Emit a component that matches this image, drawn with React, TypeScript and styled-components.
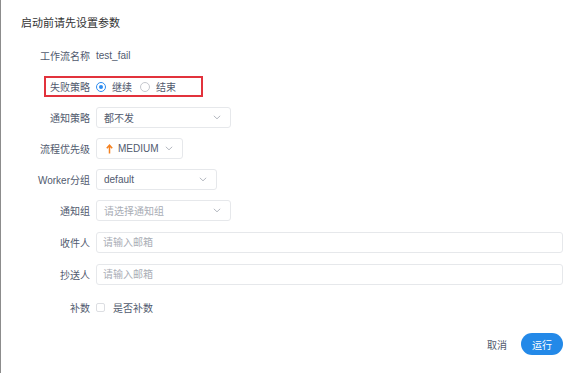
import styled, { createGlobalStyle } from 'styled-components';

const GlobalStyle = createGlobalStyle`
  body {
    margin: 0;
    background: #fff;
    font-family: "Liberation Sans", "Noto Sans CJK SC", sans-serif;
  }
`;

const Chevron = () => (
  <svg width="8" height="5" viewBox="0 0 8 5">
    <path d="M0.8 0.8 L4 3.8 L7.2 0.8" fill="none" stroke="#b4b8c0" strokeWidth="1" />
  </svg>
);

const UpArrow = () => (
  <svg width="7" height="10" viewBox="0 0 7 10">
    <path d="M3.5 9.5 V1.5 M0.8 4.2 L3.5 1.2 L6.2 4.2" fill="none" stroke="#f5811f" strokeWidth="1.5" />
  </svg>
);

const App = () => {
  return (
    <>
      <GlobalStyle />
      <Frame>
        <Title>启动前请先设置参数</Title>
        <Form>
          <Row>
            <Label>工作流名称</Label>
            <Value>test_fail</Value>
          </Row>
          <Row $marked>
            <Label>失败策略</Label>
            <RadioGroup>
              <RadioItem>
                <RadioDot $checked />
                继续
              </RadioItem>
              <RadioItem>
                <RadioDot />
                结束
              </RadioItem>
            </RadioGroup>
          </Row>
          <Row>
            <Label>通知策略</Label>
            <Select $width={135}>
              <span>都不发</span>
              <Chevron />
            </Select>
          </Row>
          <Row>
            <Label>流程优先级</Label>
            <Select $width={87}>
              <Priority>
                <UpArrow />
                MEDIUM
              </Priority>
              <Chevron />
            </Select>
          </Row>
          <Row>
            <Label>Worker分组</Label>
            <Select $width={121}>
              <span>default</span>
              <Chevron />
            </Select>
          </Row>
          <Row>
            <Label>通知组</Label>
            <Select $width={135} $placeholder>
              <span>请选择通知组</span>
              <Chevron />
            </Select>
          </Row>
          <Row $gapTop={1}>
            <Label>收件人</Label>
            <Input placeholder="请输入邮箱" />
          </Row>
          <Row $gapTop={1}>
            <Label>抄送人</Label>
            <Input placeholder="请输入邮箱" />
          </Row>
          <Row $gapTop={2}>
            <Label>补数</Label>
            <CheckItem>
              <CheckBox />
              是否补数
            </CheckItem>
          </Row>
        </Form>
        <Footer>
          <TextButton>取消</TextButton>
          <PrimaryButton>运行</PrimaryButton>
        </Footer>
      </Frame>
    </>
  );
};

export default App;

const Frame = styled.div`
  box-sizing: border-box;
  height: 373px;
  border-left: 1px solid #8c8c8c;
  padding: 15px 17px 0 19px;
`;

const Title = styled.div`
  font-size: 11px;
  line-height: 16px;
  color: #333;
  margin-left: 1px;
  margin-bottom: 14px;
`;

const Form = styled.div`
  display: flex;
  flex-direction: column;
  gap: 10px;
`;

const Row = styled.div<{ $marked?: boolean; $gapTop?: number }>`
  position: relative;
  display: flex;
  align-items: center;
  height: 21px;
  margin-top: ${(p) => p.$gapTop ?? 0}px;

  ${(p) =>
    p.$marked &&
    `
    &::after {
      content: "";
      position: absolute;
      box-sizing: border-box;
      left: 24px;
      top: 0;
      width: 159px;
      height: 21px;
      border: 2px solid #e2323c;
    }
  `}
`;

const Label = styled.div`
  box-sizing: border-box;
  width: 76px;
  flex: none;
  padding-right: 6px;
  text-align: right;
  font-size: 10px;
  color: #515a6e;
  white-space: nowrap;
`;

const Value = styled.div`
  font-size: 10px;
  color: #515a6e;
`;

const RadioGroup = styled.div`
  display: flex;
  align-items: center;
  gap: 8px;
`;

const RadioItem = styled.label`
  display: flex;
  align-items: center;
  gap: 6px;
  font-size: 10px;
  color: #515a6e;
`;

const RadioDot = styled.span<{ $checked?: boolean }>`
  position: relative;
  box-sizing: border-box;
  width: 10px;
  height: 10px;
  border-radius: 50%;
  border: 1px solid ${(p) => (p.$checked ? '#2d8cf0' : '#c5c8ce')};

  ${(p) =>
    p.$checked &&
    `
    &::after {
      content: "";
      position: absolute;
      left: 2px;
      top: 2px;
      width: 4px;
      height: 4px;
      border-radius: 50%;
      background: #2d8cf0;
    }
  `}
`;

const Select = styled.div<{ $width: number; $placeholder?: boolean }>`
  box-sizing: border-box;
  width: ${(p) => p.$width}px;
  height: 21px;
  display: flex;
  align-items: center;
  justify-content: space-between;
  padding: 0 9px 0 7px;
  border: 1px solid #e6e8eb;
  border-radius: 3px;
  font-size: 10px;
  color: ${(p) => (p.$placeholder ? '#a9adb5' : '#515a6e')};
`;

const Priority = styled.span`
  display: flex;
  align-items: center;
  gap: 5px;
  padding-left: 2px;
`;

const Input = styled.input`
  box-sizing: border-box;
  flex: 1;
  height: 21px;
  padding: 0 6px;
  border: 1px solid #e6e8eb;
  border-radius: 3px;
  font-family: inherit;
  font-size: 10px;
  color: #515a6e;
  outline: none;

  &::placeholder {
    color: #a9adb5;
  }
`;

const CheckItem = styled.label`
  display: flex;
  align-items: center;
  gap: 8px;
  font-size: 10px;
  color: #515a6e;
`;

const CheckBox = styled.span`
  box-sizing: border-box;
  width: 9px;
  height: 9px;
  border: 1px solid #dcdee2;
  border-radius: 2px;
`;

const Footer = styled.div`
  display: flex;
  justify-content: flex-end;
  align-items: center;
  gap: 14px;
  margin-top: 15px;
`;

const TextButton = styled.span`
  font-size: 10px;
  color: #515a6e;
`;

const PrimaryButton = styled.button`
  width: 42px;
  height: 22px;
  border: none;
  border-radius: 11px;
  background: #2389e8;
  color: #fff;
  font-family: inherit;
  font-size: 10px;
  padding: 0;
`;
